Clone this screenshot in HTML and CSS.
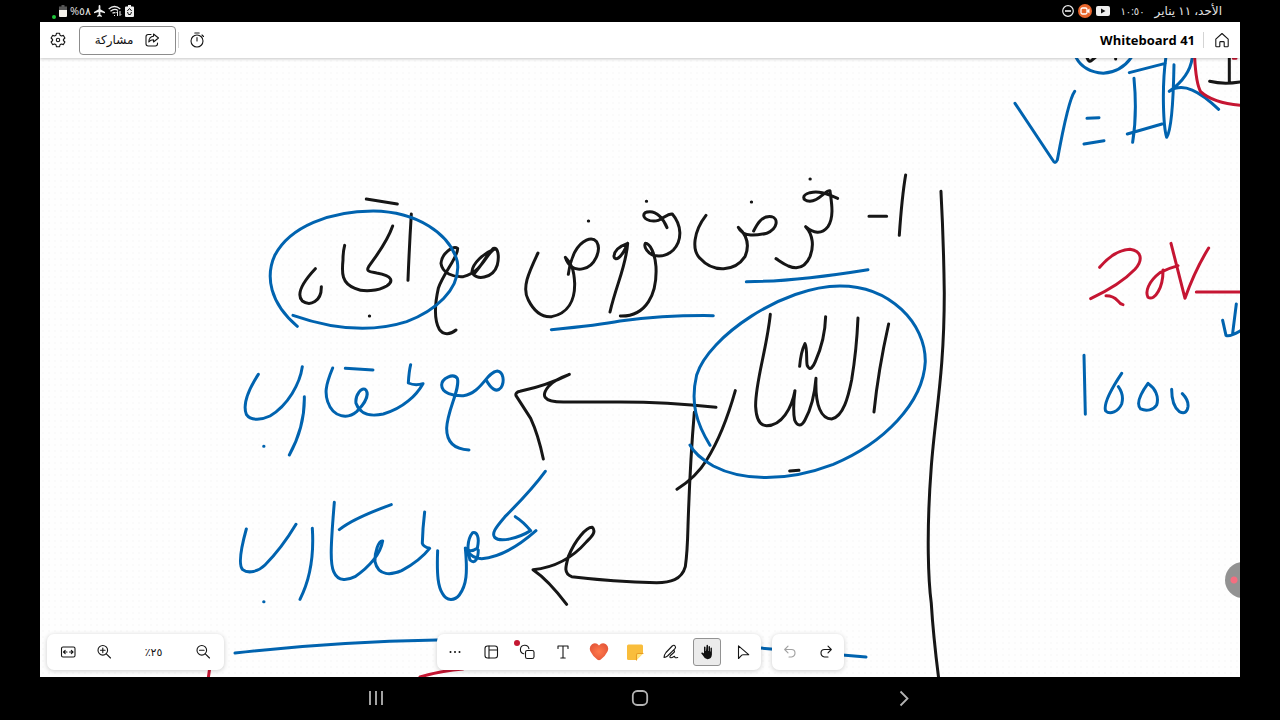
FILE: index.html
```html
<!DOCTYPE html>
<html lang="ar" dir="rtl">
<head>
<meta charset="utf-8">
<title>Whiteboard 41</title>
<link rel="stylesheet" href="styles.css">
</head>
<body>
<div class="status-bar">
  <div class="status-group">
    <span class="status-text status-date">الأحد، ١١ يناير</span>
    <span class="status-text status-time">١٠:٥٠</span>
    <div class="status-icons">
      <svg width="14" height="10" viewBox="0 0 14 10"><rect width="14" height="10" rx="2" fill="#eee"/><path d="M5 2.500v5L9.500 5z" fill="#111"/></svg>
      <svg width="14" height="14" viewBox="0 0 14 14"><circle cx="7" cy="7" r="7" fill="#e8652b"/><rect x="3" y="4" width="6" height="6" rx="1.500" fill="none" stroke="#fff" stroke-width="1.300"/><path d="M8.500 7 11.500 4.500v5z" fill="#fff"/></svg>
      <svg width="12" height="12" viewBox="0 0 12 12" fill="none" stroke="#eee" stroke-width="1.200"><circle cx="6" cy="6" r="5.300"/><path d="M3 6h6" stroke-width="1.600"/></svg>
    </div>
  </div>
  <div class="status-group status-left">
    <svg width="9" height="12" viewBox="0 0 9 12"><path d="M3 0h3v1.500h2Q9 1.500 9 2.500V11q0 1-1 1H1q-1 0-1-1V2.500q0-1 1-1h2z" fill="#eee"/><path d="M2.300 6 4.500 3.500 6.700 6M2.500 7l1 2.500h2L6.500 7" fill="none" stroke="#111"/></svg>
    <svg width="14" height="12" viewBox="0 0 14 12" fill="none" stroke="#eee" stroke-width="1.300"><path d="M.7 4Q6.500-1 12.300 4M2.500 6.200Q6.500 3 10 5.500M4.500 8.300Q6 7 7.500 8"/><path d="M6 10.500h1M9.500 11V6.500l-1.200 1.200M12 6v4.500l1.200-1.200" stroke-width="1"/></svg>
    <svg width="11" height="12" viewBox="0 0 11 12"><path d="M5.500 0q.9 0 .9 1.400v2.800L11 7v1.200L6.400 7v2.800l1.400 1V12L5.500 11.300 3.200 12v-1.200l1.400-1V7L0 8.200V7l4.600-2.800V1.400Q4.600 0 5.500 0z" fill="#eee"/></svg>
    <span class="status-text">٥٨%</span>
    <svg width="8" height="12" viewBox="0 0 8 12"><path d="M2.500 0h3v1.500H8V6H0V1.500h2.500z" fill="#555"/><path d="M0 5h8v6q0 1-1 1H1q-1 0-1-1z" fill="#f4f1ea"/></svg>
    <i class="privacy-dot"></i>
  </div>
</div>

<main class="app">
  <header class="app-header">
    <div class="header-group">
      <button class="icon-button" aria-label="الصفحة الرئيسية"><svg width="16" height="16" viewBox="0 0 16 16"><path d="M1.800 7.200 8 1.500l6.200 5.700V14q0 .8-.8.800h-2.600q-.6 0-.6-.6V10.500q0-.9-.8-.9H6.600q-.8 0-.8.9v3.700q0 .6-.6.6H2.600q-.8 0-.8-.8z"/></svg></button>
      <i class="divider"></i>
      <h1 class="board-title" dir="ltr">Whiteboard 41</h1>
    </div>
    <div class="header-group">
      <button class="icon-button timer" aria-label="مؤقت"><svg width="16" height="16" viewBox="0 0 16 16"><circle cx="8" cy="9" r="6"/><path d="M8 5.500V9M5.800 1h4.400M13 3l1.500 1.500"/></svg></button>
      <i class="divider"></i>
      <button class="share"><svg width="16" height="16" viewBox="0 0 16 16"><path d="M7 2.500H4.200Q2 2.500 2 4.700v7.100Q2 14 4.200 14h7.100q2.200 0 2.200-2.200V11M9.500 2 14.500 6l-5 4V7.800Q6.500 7.800 4.800 10 5 4.800 9.500 4.300z"/></svg><span>مشاركة</span></button>
      <button class="icon-button" aria-label="الإعدادات"><svg width="16" height="16" viewBox="0 0 16 16"><path d="M6.500 1.200h3l.5 2 1.400.8 2-.6 1.500 2.600L13.400 7.500v1l1.500 1.500-1.500 2.600-2-.6-1.400.8-.5 2h-3l-.5-2-1.400-.8-2 .6L1.100 10l1.500-1.500v-1L1.100 6l1.500-2.600 2 .6L6 3.200z"/><circle cx="8" cy="8" r="1.700"/></svg></button>
    </div>
  </header>

  <section class="canvas">
    <svg class="ink" viewBox="40 58 1200 619" preserveAspectRatio="xMidYMid slice" role="img" aria-label="ملاحظات بخط اليد">
      <g class="black" transform="translate(500 160) scale(.3333)">
        <path d="M1217 45Q1206 110 1198 226M1107 169h53M1323 94Q1331 240 1333 400C1333 640 1306 760 1294 920C1278 1130 1286 1270 1294 1330Q1300 1430 1318 1570"/>
        <path d="M1013 115C975 98 955 93 930 98C905 105 905 122 930 124C960 122 975 90 990 92C995 130 1003 170 984 200C965 225 940 220 917 200C940 225 942 260 930 290C915 325 890 328 865 318C848 310 838 302 828 296"/>
        <path d="M618 166C580 215 575 270 600 295C640 340 705 335 735 290C750 255 740 225 715 202C730 235 775 225 800 220C835 205 835 175 815 170C785 165 770 195 761 213"/>
        <path d="M501 203C490 175 470 155 450 155C425 155 425 175 450 182C485 190 495 160 517 162C545 195 548 240 520 270C500 290 480 290 460 286C445 280 430 262 436 250C450 250 465 280 468 320C472 400 440 470 361 468"/>
        <path d="M330 456C350 370 378 320 383 250C355 260 342 275 342 290C345 305 365 295 383 250"/>
        <path d="M114 279C85 340 65 385 85 420C105 460 130 472 155 470C205 460 225 420 224 370C222 330 215 310 196 292C205 320 225 332 250 326C285 318 305 270 290 245C275 228 245 240 225 275C210 305 207 325 205 343"/>
        <path d="M265 183h1M439 124h1M754 126h1M930 57h1"/>
      </g>
      <g class="black" transform="translate(220 180) scale(.3333)">
        <path d="M439 57 532 72M574 102Q568 200 564 301M518 138C500 190 470 225 446 260C437 275 450 275 470 279C520 287 520 305 500 318C475 333 430 337 405 325C365 310 365 280 369 240Q369 215 374 196M286 266C240 315 230 345 247 363C270 380 305 365 304 320M448 408h1"/>
        <path d="M708 450C690 465 670 465 658 448C640 415 645 370 655 325C670 280 715 230 713 205C700 195 665 220 663 250C667 280 700 292 730 290C790 275 800 215 826 206C790 220 758 250 756 275C765 305 820 295 832 255C838 230 835 200 820 205C800 225 790 250 765 278"/>
      </g>
      <g class="black" transform="translate(500 280) scale(.3333)">
        <path d="M811 103C800 210 765 310 767 380C769 420 780 437 800 437C845 437 875 385 885 332C880 370 880 400 884 420C892 440 905 440 915 420Q942 370 948 295C945 380 965 417 995 417C1030 410 1045 350 1055 300Q1070 210 1074 114M899 259Q903 215 915 191C923 205 918 245 922 257C930 275 940 260 946 245Q975 180 977 110M1166 132Q1135 270 1122 396"/>
        <path d="M706 332Q670 460 620 540Q590 590 531 628M869 573 897 571M648 382Q500 366 360 366H190C125 366 125 345 145 320Q160 300 208 283Q145 315 60 334Q45 337 48 347L92 415Q115 465 130 537"/>
        <path d="M583 397Q570 550 564 740Q562 820 556 860C545 900 510 908 470 908Q340 905 215 890C190 880 197 860 205 830C225 780 260 740 277 742C290 755 275 770 260 785Q195 860 99 869Q145 900 200 973"/>
      </g>
      <g class="blue" transform="translate(500 280) scale(.3333)">
        <path d="M154 149Q300 135 360 123Q500 105 640 107M739 5Q880 5 1104-31"/>
        <path d="M630 496C590 430 570 370 590 285C625 170 850 18 1020 18C1170 18 1277 130 1276 245C1270 370 1150 490 1000 553C850 610 720 600 640 558C600 535 580 515 570 495"/>
      </g>
      <g class="blue" transform="translate(220 180) scale(.3333)">
        <path d="M232 439C150 370 135 290 165 225C210 140 330 93 460 93C590 95 690 160 712 245C725 330 640 395 560 425C450 460 330 445 219 406"/>
      </g>
      <g class="blue" transform="translate(220 350) scale(.3333)">
        <path d="M115 73C75 135 70 170 79 193C92 213 125 210 150 198C205 165 240 100 247 50M253 140Q255 230 208 315M131 289h1M338 54C315 110 315 130 323 155C340 205 385 207 410 185C440 155 446 132 438 120C425 108 405 135 408 160C420 195 455 200 490 192C550 175 590 135 609 101Q585 108 565 99Q567 65 572 44M376 55 459 60"/>
        <path d="M747 300C700 298 680 275 680 235C682 180 722 115 712 85C700 68 665 85 665 105C665 130 700 138 730 137C785 130 800 65 832 63C850 65 855 95 843 113C830 130 812 115 799 91"/>
        <path d="M79 537C60 605 55 645 68 659C85 672 115 665 135 645Q185 595 228 523M277 535Q285 660 240 748M131 755h1M343 457C332 590 330 640 341 665C355 698 385 690 405 680C450 650 482 610 488 573C475 570 464 610 465 635C475 680 515 675 545 662Q600 632 629 595Q610 590 607 580Q608 535 614 486M358 539Q400 505 514 464"/>
        <path d="M653 602C650 680 655 710 667 730C680 755 705 752 718 735C740 705 743 670 736 594Q750 610 772 595C780 560 770 545 758 548C740 570 742 605 750 630C765 645 775 625 775 600M741 600Q755 625 785 626Q860 620 948 542M976 364Q935 420 855 500C825 535 815 550 824 562C840 578 895 565 932 542Q910 515 886 500"/>
      </g>
      <g class="blue" transform="translate(1000 50) scale(.3333)">
        <path d="M45 160 158 330Q165 345 172 330Q205 150 224 124M261 205 297 203M252 282 312 272M228 22Q250 65 310 70Q365 65 394 22M388 68 496 40M402 85Q412 190 398 277M382 252 486 222M498 20C485 110 490 230 500 262C515 240 520 160 522 44M577 22Q570 80 508 124C550 95 600 125 656 178"/>
      </g>
      <g class="black" transform="translate(1000 50) scale(.3333)"><path d="M261 23Q267 38 274 32L286 22M347 22v5M688 20v80M629 94Q670 104 720 96"/></g>
      <g class="red" transform="translate(1000 50) scale(.3333)"><path d="M584 22Q588 100 602 125Q640 160 725 166M700 25h8"/></g>
      <g class="red" transform="translate(1060 230) scale(.3333)"><path d="M119 112C150 75 180 60 210 58C245 63 250 90 225 118Q180 165 92 206M138 197Q160 197 173 212Q180 222 189 224M354 107Q325 115 300 128C265 155 255 185 264 202C285 215 310 170 309 120M333 40 375 205Q405 120 446 54M409 186H545"/></g>
      <g class="blue" transform="translate(1060 230) scale(.3333)"><path d="M72 376 76 553M185 430C145 490 130 525 137 543C150 555 175 545 185 522Q193 495 175 470M264 460C235 500 230 525 242 537C260 545 280 540 290 525C298 500 285 475 267 463M335 478C335 515 345 535 358 545C375 553 382 545 384 530Q386 510 367 491M529 222 518 310M488 271 498 316Q510 322 545 300"/></g>
      <g class="blue"><path d="M235 653Q330 642 437 640Q600 638 760 648L866 657"/></g>
      <g class="red"><path d="M210 666 208 680M420 677Q440 671 463 669"/></g>
    </svg>

    <i class="record-bubble"></i>

    <div class="dock">
      <div class="dock-side"></div>
      <div class="dock-center">
        <div class="panel">
          <button class="tool" aria-label="إعادة"><svg width="16" height="16" viewBox="0 0 16 16"><path d="M13 5.500H6.500Q3 5.500 3 9t3.500 4H10M10 2.200l3.300 3.300L10 8.800"/></svg></button>
          <button class="tool" aria-label="تراجع" disabled><svg width="16" height="16" viewBox="0 0 16 16"><path d="M3 5.500h6.500Q13 5.500 13 9t-3.500 4H7M6 2.200 2.700 5.500 6 8.800"/></svg></button>
        </div>
        <div class="panel">
          <button class="tool" aria-label="تحديد"><svg width="16" height="16" viewBox="0 0 16 16"><path d="M3.500 1.800v12.700l3.300-3.300q.5-.5 1.200-.5h5.700z"/></svg></button>
          <button class="tool selected" aria-label="تحريك" aria-pressed="true"><svg width="16" height="16" viewBox="0 0 16 16"><path class="solid" d="M7.600 1Q8.500.4 9 1.300V7h.5V2.500q.8-1 1.500 0V7.500h.5V4q.8-.9 1.400 0V10.500Q12.600 15 8.500 15.200 5.500 15 4.300 12L2.200 9.300q.2-1.200 1.800-.6l1 .7V3q.7-1 1.500 0v4H7z"/></svg></button>
          <button class="tool" aria-label="حبر"><svg width="16" height="16" viewBox="0 0 16 16"><path d="M1 13.500Q1.300 10.500 3 8.500L9.200 2Q11 .5 12.200 2.200q.9 1.400-.4 2.600L4.500 12Q3 13.200 1 13.500zM9.500 7q1.700-1 2 .2.100.8-1.200 1.800L7.500 11.500q-1.500 2 .5 2.200 1.200 0 2.500-1 1.500-1 1.200.3 0 1.200 3 .5"/></svg></button>
          <button class="tool" aria-label="ملاحظات"><svg width="18" height="18" viewBox="0 0 18 18"><path class="art" d="M2.500 1.500h13q1.500 0 1.500 1.500v7.500L10.500 17h-8Q1 17 1 15.500V3q0-1.500 1.500-1.500z" fill="#f9bd3b"/><path class="art" d="M10.500 17v-5q0-1.500 1.500-1.500h5z" fill="#ffe47a"/><path class="fold" d="M10.500 17v-5q0-1.500 1.500-1.500h5"/></svg></button>
          <button class="tool" aria-label="تفاعلات"><svg width="20" height="20" viewBox="0 0 20 20"><defs><radialGradient id="heart"><stop stop-color="#ff794b"/><stop offset="1" stop-color="#e75a3b"/></radialGradient></defs><path class="art" d="M10 3.500Q13-.2 17 2.200q3.500 2.800 1.500 7.300Q16.500 14 11.500 17.700 10 18.600 8.500 17.700 3.500 14 1.500 9.500-.5 5 3 2.200 7-.2 10 3.500z" fill="url(#heart)"/></svg></button>
          <button class="tool" aria-label="نص"><svg width="16" height="16" viewBox="0 0 16 16"><path d="M3 4.500V2h10v2.500M8 2v12M5.800 14h4.400"/></svg></button>
          <button class="tool" aria-label="أشكال"><svg width="16" height="16" viewBox="0 0 16 16"><path d="M4.800 9.800A4.300 4.300 0 1 1 9.900 4.600"/><rect x="6.500" y="6.500" width="8.500" height="8" rx="1.800"/></svg><i class="badge"></i></button>
          <button class="tool" aria-label="قوالب"><svg width="16" height="16" viewBox="0 0 16 16"><rect x="2" y="2" width="12.500" height="12" rx="2.500"/><path d="M6 2v12M6 6h8.500"/></svg></button>
          <button class="tool" aria-label="المزيد"><svg width="16" height="16" viewBox="0 0 16 16"><g class="solid"><circle cx="3.500" cy="8" r="1"/><circle cx="8" cy="8" r="1"/><circle cx="12.500" cy="8" r="1"/></g></svg></button>
        </div>
      </div>
      <div class="dock-side dock-end">
        <div class="panel zoom-panel">
          <button class="tool" aria-label="تصغير"><svg width="16" height="16" viewBox="0 0 16 16"><circle cx="6.800" cy="6.300" r="4.800"/><path d="M10.300 9.800 14.500 14M4.500 6.300h4.600"/></svg></button>
          <button class="zoom-value">٢٥٪</button>
          <button class="tool" aria-label="تكبير"><svg width="16" height="16" viewBox="0 0 16 16"><circle cx="6.800" cy="6.300" r="4.800"/><path d="M10.300 9.800 14.500 14M4.500 6.300h4.600M6.800 4v4.600"/></svg></button>
          <button class="tool" aria-label="ملاءمة"><svg width="16" height="16" viewBox="0 0 16 16"><rect x="1.500" y="3" width="13.500" height="10" rx="1.500"/><path d="M7 8H3.700M5.200 6.300 3.500 8l1.700 1.700M9.500 8h3.300M11.300 6.300 13 8l-1.700 1.700"/></svg></button>
        </div>
      </div>
    </div>
  </section>
</main>

<nav class="nav-bar">
  <button class="nav-button" aria-label="رجوع"><svg width="24" height="24" viewBox="0 0 24 24"><path d="m8.500 4.500 7 7-7 7"/></svg></button>
  <button class="nav-button" aria-label="الشاشة الرئيسية"><svg width="24" height="24" viewBox="0 0 24 24"><rect x="4.800" y="4" width="14.400" height="14" rx="4.500"/></svg></button>
  <button class="nav-button" aria-label="التطبيقات الحديثة"><svg width="24" height="24" viewBox="0 0 24 24"><path d="M6 4v14M12 4v14M18 4v14"/></svg></button>
</nav>
</body>
</html>
```

FILE: styles.css
```css
* {
  box-sizing: border-box;
}

body {
  margin: 0;
  height: 100vh;
  display: flex;
  flex-direction: column;
  background: #000;
  color: #111;
  font-family: "Open Sans", "Noto Sans", "DejaVu Sans", sans-serif;
  overflow: hidden;
}

button {
  padding: 0;
  border: 0;
  background: none;
  color: inherit;
  font: inherit;
}

svg {
  display: block;
  flex: none;
}

.status-bar {
  flex: none;
  height: 22px;
  padding: 0 58px 0 52px;
  display: flex;
  align-items: center;
  justify-content: space-between;
  color: #e4e4e4;
}

.status-group,
.status-icons {
  display: flex;
  align-items: center;
}

.status-icons {
  gap: 4px;
}

.status-left {
  gap: 3px;
}

.status-text {
  font-size: 11px;
  line-height: 16px;
  white-space: nowrap;
}

.status-date {
  font-size: 12px;
}

.status-time {
  font-size: 10px;
  margin: 0 10px;
}

.privacy-dot {
  width: 4px;
  height: 4px;
  border-radius: 50%;
  background: #1fc43a;
  align-self: flex-end;
}

.app {
  flex: 1;
  min-height: 0;
  margin: 0 40px;
  display: flex;
  flex-direction: column;
  background: #fff;
}

.app-header {
  position: relative;
  z-index: 1;
  flex: none;
  height: 36px;
  padding: 0 8px;
  display: flex;
  align-items: center;
  justify-content: space-between;
  background: #fff;
  box-shadow: 0 1px 3px rgba(0, 0, 0, 0.22);
}

.header-group {
  display: flex;
  align-items: center;
}

.icon-button {
  width: 20px;
  height: 28px;
  display: grid;
  place-items: center;
}

.icon-button svg,
.share svg,
.tool svg {
  fill: none;
  stroke: #161616;
  stroke-width: 1.1;
  stroke-linejoin: round;
  stroke-linecap: round;
}

.divider {
  width: 1px;
  height: 16px;
  margin: 0 8px;
  background: #d4d4d4;
}

.board-title {
  margin: 0;
  font-size: 13px;
  line-height: 20px;
  font-weight: 700;
  color: #000;
}

.header-group .timer + .divider {
  margin: 0 8px 0 2px;
}

.share {
  width: 97px;
  height: 29px;
  margin-left: 11px;
  display: flex;
  align-items: center;
  justify-content: center;
  gap: 11px;
  border: 1px solid #8c8c8c;
  border-radius: 4px;
  font-size: 12px;
  line-height: 20px;
}

.canvas {
  position: relative;
  flex: 1;
  min-height: 0;
  overflow: hidden;
  background: radial-gradient(circle, #fafafa 1px, transparent 1px) 0 0 / 6px 6px #fefefe;
}

.ink {
  width: 100%;
  height: 100%;
  fill: none;
  stroke-width: 3;
  stroke-linecap: round;
  stroke-linejoin: round;
}

.ink path {
  vector-effect: non-scaling-stroke;
}

.black {
  stroke: #161616;
}

.blue {
  stroke: #0063af;
}

.red {
  stroke: #c51532;
}

.record-bubble {
  position: absolute;
  right: -21px;
  bottom: 79px;
  width: 36px;
  height: 36px;
  border-radius: 50%;
  background: radial-gradient(circle at 9px 18px, #f46e80 3px, #929292 4px);
}

.dock {
  position: absolute;
  inset: auto 7px 7px 7px;
  display: grid;
  grid-template-columns: 1fr auto 1fr;
}

.dock-center {
  display: flex;
  gap: 11px;
}

.dock-end {
  display: flex;
  justify-content: flex-end;
}

.panel {
  display: flex;
  align-items: center;
  gap: 8px;
  padding: 4px;
  border-radius: 7px;
  background: #fff;
  box-shadow: 0 1px 5px rgba(0, 0, 0, 0.2);
}

.zoom-panel {
  padding: 4px 7px;
}

.tool {
  position: relative;
  width: 28px;
  height: 28px;
  display: grid;
  place-items: center;
  border-radius: 3px;
}

.tool:disabled {
  opacity: 0.4;
}

.tool.selected {
  background: #ebebeb;
  border: 1px solid #929292;
}

.tool .solid {
  fill: #111;
  stroke: none;
}

.tool .art {
  stroke: none;
}

.tool .fold {
  stroke: #e99c22;
}

.badge {
  position: absolute;
  top: 2px;
  left: 1px;
  width: 6px;
  height: 6px;
  border-radius: 50%;
  background: #c41832;
}

.zoom-value {
  width: 55px;
  height: 28px;
  font-size: 11px;
  line-height: 28px;
}

.nav-bar {
  flex: none;
  height: 43px;
  display: flex;
  align-items: center;
  justify-content: center;
  gap: 240px;
}

.nav-button svg {
  fill: none;
  stroke: #b4b4b4;
  stroke-width: 1.8;
}
```
